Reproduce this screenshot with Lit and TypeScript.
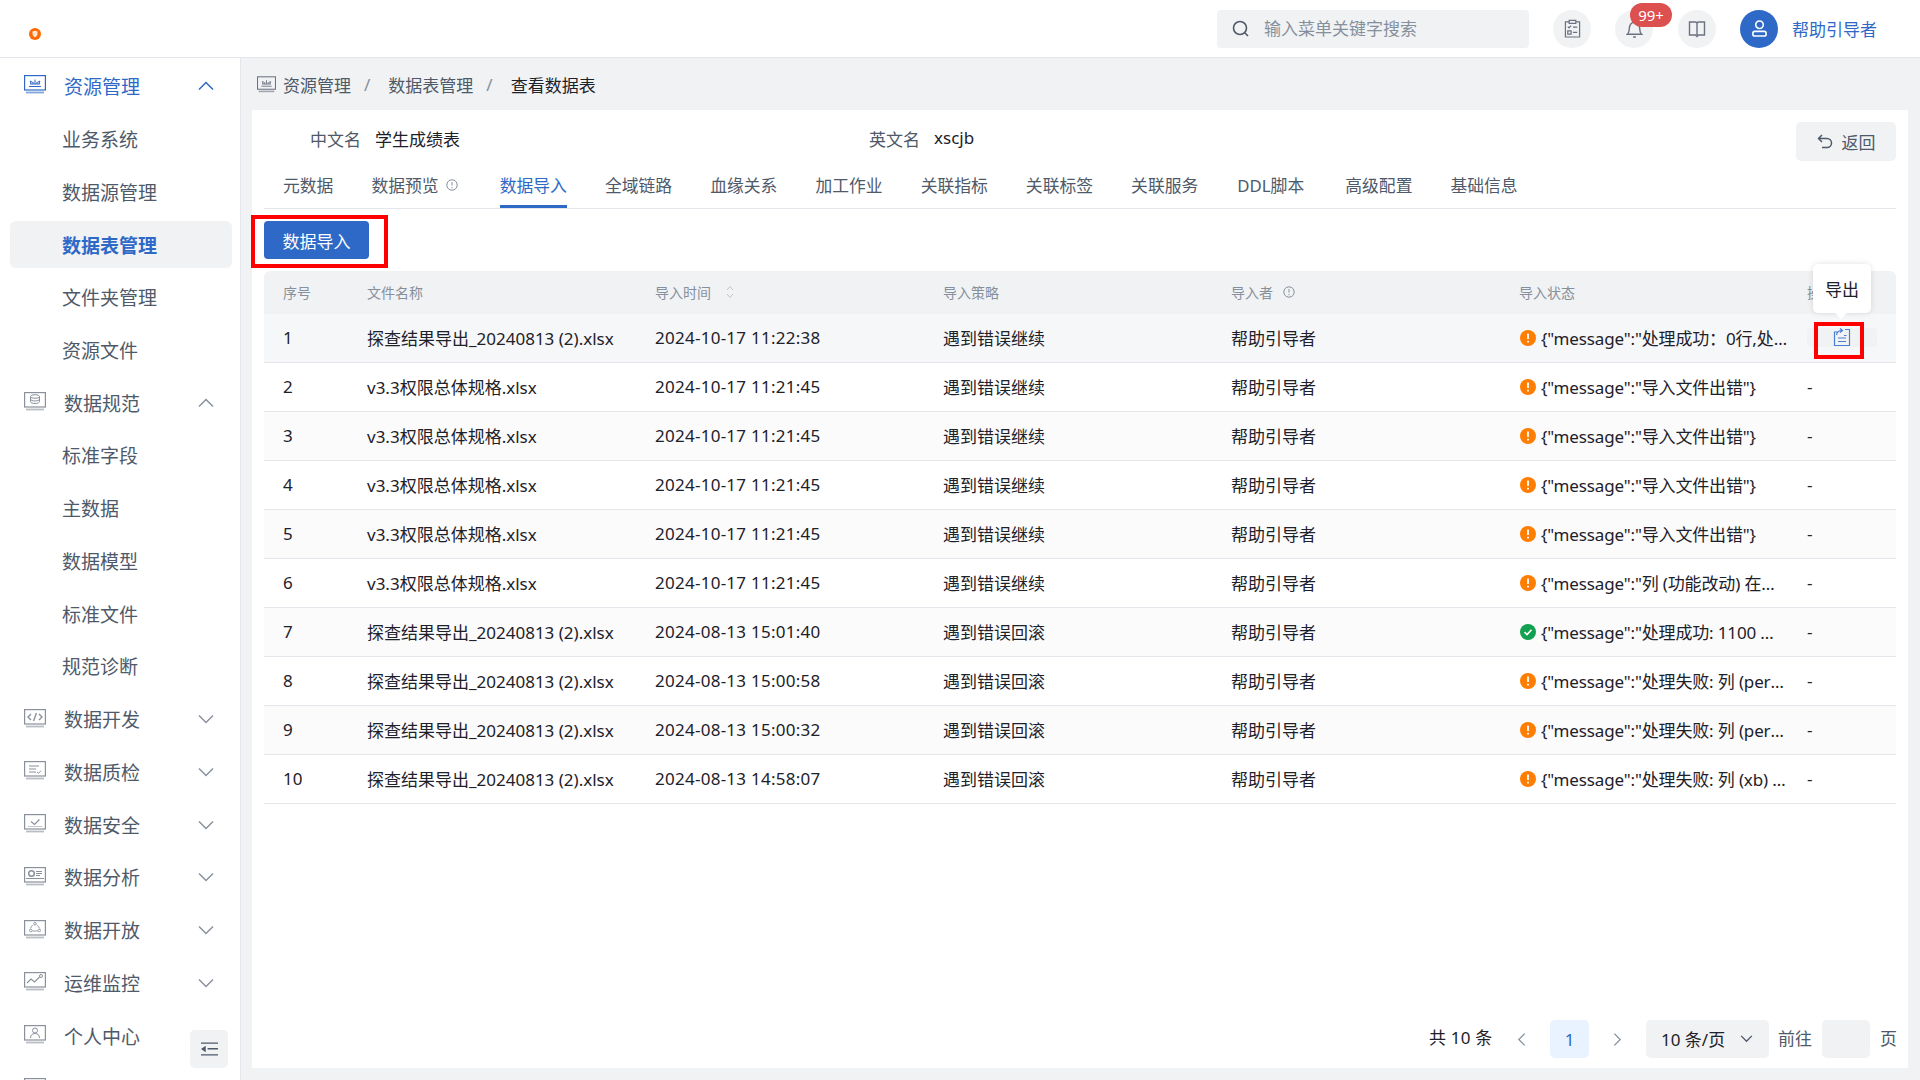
import { LitElement, html, css, svg } from 'lit'
import { customElement } from 'lit/decorators.js'

const monitor = (inner: unknown) => html`<svg class="mon" viewBox="0 0 22 19" width="22" height="19" fill="none" stroke="currentColor">
  <rect x="0.6" y="0.6" width="20.8" height="14.4" stroke-width="1.2" />
  <path d="M2 17.5h18" stroke-width="1.8" opacity=".6" />
  ${inner}
</svg>`

const sideIcons: Record<string, unknown> = {
  res: svg`<path d="M5 11.5h12M6 9h10M7 9l-.8-3 2.4 1.4M15 9l.8-3-2.4 1.4M11 9V4.5M9 9V6.8M13 9V6.8" stroke-width="1" />`,
  spec: svg`<ellipse cx="11" cy="4.5" rx="4.5" ry="1.8" stroke-width="1" /><path d="M6.5 7c0 1.2 2 2 4.500 2s4.500-.8 4.500-2M6.500 9.500c0 1.200 2 2 4.500 2s4.500-.8 4.500-2M6.500 4.500v5M15.500 4.500v5" stroke-width="1" />`,
  dev: svg`<path d="M7 5 4 8l3 3M15 5l3 3-3 3M12.500 4 9.500 12" stroke-width="1.400" />`,
  qc: svg`<path d="M5 5h10M5 8h7M5 11h7M13 11l1.500 1.300 2.500-2.600" stroke-width="1" />`,
  safe: svg`<path d="M7 7.500l3.500 3L15.500 5.500" stroke-width="1.200" /><path d="M4 12.500h14" stroke-width="1" opacity=".5" />`,
  ana: svg`<circle cx="7.500" cy="6.500" r="2.800" stroke-width="1.500" /><path d="M12 4.500h6M12 6.500h6M12 8.500h4M2 11.500h18" stroke-width="1.200" />`,
  open: svg`<circle cx="11" cy="3.800" r="1.300" stroke-width=".9" /><circle cx="6.800" cy="10.500" r="1.300" stroke-width=".9" /><circle cx="15.200" cy="10.500" r="1.300" stroke-width=".9" /><path d="M8.500 5.200 6.300 8.500M13.500 5.200l2.200 3.300M8.500 11h5" stroke-width=".9" />`,
  ops: svg`<path d="M3 11l4-4 3.500 3L15.500 5" stroke-width="1.100" /><circle cx="17" cy="4" r="1.500" stroke-width="1" />`,
  me: svg`<circle cx="11" cy="5.500" r="2.500" stroke-width="1" /><path d="M6.500 13c0-3 2-4.500 4.500-4.500s4.500 1.500 4.500 4.500" stroke-width="1" />`,
}

const chevron = (up: boolean) => html`<svg class="chev" viewBox="0 0 16 10" width="16" height="10" fill="none" stroke="currentColor" stroke-width="1.500">
  <path d=${up ? 'M1 8.500 8 1.500l7 7' : 'M1 1.500l7 7 7-7'} />
</svg>`

const info = () => html`<svg class="info" viewBox="0 0 12 12" width="12" height="12" fill="none" stroke="currentColor">
  <circle cx="6" cy="6" r="5.200" stroke-width="1" /><path d="M6 3v3.600M6 8v1.200" stroke-width="1" />
</svg>`

type Menu = { label: string; icon?: string; open?: boolean; active?: boolean; current?: boolean; sub?: boolean; noChev?: boolean }

const menu: Menu[] = [
  { label: '资源管理', icon: 'res', open: true, current: true },
  { label: '业务系统', sub: true },
  { label: '数据源管理', sub: true },
  { label: '数据表管理', sub: true, active: true },
  { label: '文件夹管理', sub: true },
  { label: '资源文件', sub: true },
  { label: '数据规范', icon: 'spec', open: true },
  { label: '标准字段', sub: true },
  { label: '主数据', sub: true },
  { label: '数据模型', sub: true },
  { label: '标准文件', sub: true },
  { label: '规范诊断', sub: true },
  { label: '数据开发', icon: 'dev' },
  { label: '数据质检', icon: 'qc' },
  { label: '数据安全', icon: 'safe' },
  { label: '数据分析', icon: 'ana' },
  { label: '数据开放', icon: 'open' },
  { label: '运维监控', icon: 'ops' },
  { label: '个人中心', icon: 'me', noChev: true },
  { label: '', icon: 'me', noChev: true },
]

const tabs = ['元数据', '数据预览', '数据导入', '全域链路', '血缘关系', '加工作业', '关联指标', '关联标签', '关联服务', 'DDL脚本', '高级配置', '基础信息']

const longName = '探查结果导出_20240813 (2).xlsx'
const v33 = 'v3.3权限总体规格.xlsx'
const rows = [
  [longName, '2024-10-17 11:22:38', '遇到错误继续', '{"message":"处理成功：0行,处理失败：0行"}', 'warn'],
  [v33, '2024-10-17 11:21:45', '遇到错误继续', '{"message":"导入文件出错"}', 'warn'],
  [v33, '2024-10-17 11:21:45', '遇到错误继续', '{"message":"导入文件出错"}', 'warn'],
  [v33, '2024-10-17 11:21:45', '遇到错误继续', '{"message":"导入文件出错"}', 'warn'],
  [v33, '2024-10-17 11:21:45', '遇到错误继续', '{"message":"导入文件出错"}', 'warn'],
  [v33, '2024-10-17 11:21:45', '遇到错误继续', '{"message":"列 (功能改动) 在文件中不存在"}', 'warn'],
  [longName, '2024-08-13 15:01:40', '遇到错误回滚', '{"message":"处理成功: 1100 行数据导入完成"}', 'ok'],
  [longName, '2024-08-13 15:00:58', '遇到错误回滚', '{"message":"处理失败: 列 (person) 不存在"}', 'warn'],
  [longName, '2024-08-13 15:00:32', '遇到错误回滚', '{"message":"处理失败: 列 (person) 不存在"}', 'warn'],
  [longName, '2024-08-13 14:58:07', '遇到错误回滚', '{"message":"处理失败: 列 (xb) 不存在于文件"}', 'warn'],
]

@customElement('app-root')
export class AppRoot extends LitElement {
  static styles = css`
    :host {
      display: block;
      width: 1920px;
      height: 1080px;
      overflow: hidden;
      background: #f1f2f4;
      color: #1d2129;
      font-family: 'Noto Sans', 'Noto Sans CJK SC', sans-serif;
      font-size: 17px;
    }
    svg { display: block; flex: none; }

    .top {
      height: 57px;
      background: #fff;
      border-bottom: 1px solid #e5e6eb;
      display: flex;
      align-items: center;
      position: relative;
    }
    .logo { margin-left: 29px; margin-top: 11px; }
    .search {
      margin-left: auto;
      width: 312px;
      height: 38px;
      background: #f1f2f4;
      border-radius: 4px;
      display: flex;
      align-items: center;
      gap: 14px;
      padding: 0 0 2px 15px;
      box-sizing: border-box;
      color: #86909c;
    }
    .search svg { color: #4e5969; margin-top: 2px; }
    .round {
      width: 38px;
      height: 38px;
      border-radius: 50%;
      background: #f1f2f4;
      margin-left: 24px;
      display: flex;
      align-items: center;
      justify-content: center;
      color: #6b7280;
      position: relative;
    }
    .round.wide { margin-left: 25px; }
    .round.avatar { background: #2e69c7; color: #fff; }
    .badge {
      position: absolute;
      left: 15px;
      top: -7px;
      width: 42px;
      height: 24px;
      border-radius: 12px;
      background: #dc5050;
      color: #fff;
      font-size: 15px;
      line-height: 24px;
      text-align: center;
    }
    .user { color: #2e69c7; margin-left: 14px; margin-right: 43px; }

    .body { display: flex; height: 1022px; }
    .side {
      width: 241px;
      flex: none;
      box-sizing: border-box;
      background: #fff;
      border-right: 1px solid #e5e6eb;
      padding-top: 1.600px;
      position: relative;
      overflow: hidden;
      font-size: 19px;
      color: #4e5969;
    }
    .item {
      height: 52.780px;
      display: flex;
      align-items: center;
      padding-left: 24px;
      position: relative;
    }
    .item .mon { color: #8a919c; margin-top: -2px; }
    .item .label { margin-left: 18px; }
    .item .chev { position: absolute; left: 198px; color: #8a919c; }
    .item.sub { padding-left: 62px; }
    .item.sub .label { margin-left: 0; }
    .item.current { color: #2e69c7; }
    .item.current .mon, .item.current .chev { color: #2e69c7; }
    .item.active { color: #2e69c7; font-weight: 700; }
    .item.active::before {
      content: '';
      position: absolute;
      left: 10px;
      right: 8px;
      top: 3px;
      bottom: 3px;
      background: #f1f2f4;
      border-radius: 6px;
    }
    .item.active .label { position: relative; top: 1px; }
    .collapse {
      position: absolute;
      left: 190px;
      bottom: 12px;
      width: 38px;
      height: 38px;
      background: #f1f2f4;
      border-radius: 5px;
      display: flex;
      align-items: center;
      justify-content: center;
      color: #4e5969;
    }

    .main { flex: 1; min-width: 0; padding-right: 12px; display: flex; flex-direction: column; }
    .crumbs {
      height: 52px;
      padding-left: 16px;
      display: flex;
      align-items: center;
      color: #4e5969;
    }
    .crumbs .mon { margin-right: 7px; color: #6b7280; width: 19px; height: 17px; }
    .crumbs i { font-style: normal; color: #86909c; margin: 0 18px 0 13px; }
    .crumbs b { font-weight: 400; color: #1d2129; }

    .card {
      margin-left: 11px;
      height: 958px;
      background: #fff;
      padding: 0 12px;
      display: flex;
      flex-direction: column;
      position: relative;
    }
    .names { height: 60px; display: flex; align-items: center; position: relative; padding-bottom: 4px; box-sizing: border-box; }
    .names .k { color: #4e5969; }
    .names .v { margin-left: 14px; }
    .names .cn { margin-left: 46px; width: 559px; display: flex; }
    .names .en { display: flex; }
    .back {
      margin-left: auto;
      margin-top: 7px;
      width: 100px;
      height: 39px;
      background: #f1f2f4;
      border-radius: 5px;
      display: flex;
      align-items: center;
      justify-content: center;
      gap: 9px;
      color: #4e5969;
    }
    .tabs {
      height: 38px;
      border-bottom: 1px solid #e5e6eb;
      display: flex;
      gap: 38.100px;
      padding-left: 19px;
      color: #4e5969;
      font-size: 16.800px;
    }
    .tab { display: flex; align-items: flex-start; gap: 7px; padding-top: 4px; height: 33px; box-sizing: border-box; line-height: 23px; }
    .tab .info { color: #86909c; margin: 5px 4px 0 0; }
    .tab.on { color: #2e69c7; box-shadow: inset 0 -3px 0 #2e69c7; height: 38px; }
    .tab:nth-child(10) { margin: 0 3px 0 1px; }

    .tools { height: 62px; display: flex; align-items: flex-start; padding-top: 12px; box-sizing: border-box; }
    .primary {
      width: 105px;
      height: 38px;
      border-radius: 4px;
      background: #2e69c7;
      color: #fff;
      display: flex;
      align-items: center;
      justify-content: center;
      position: relative;
    }
    .mark { position: absolute; border: 4px solid #ff0000; box-sizing: border-box; pointer-events: none; }
    .primary .mark { left: -13px; top: -6px; width: 137px; height: 53px; }

    .row { display: grid; grid-template-columns: 84px repeat(5, 288px) 1fr; align-items: center; }
    .row > div { padding-left: 19px; min-width: 0; white-space: nowrap; }
    .head { height: 43px; background: #f1f2f4; border-radius: 6px 6px 0 0; font-size: 14px; color: #86909c; padding-bottom: 1px; box-sizing: border-box; }
    .head .cell { display: flex; align-items: center; gap: 10px; }
    .head .cell.sort { gap: 15px; }
    .data { height: 49px; border-bottom: 1px solid #e5e6eb; box-sizing: border-box; padding-bottom: 1px; }
    .data:nth-child(odd) { background: #fbfbfc; }
    .data.first { background: #f6f7f9; }
    .date { letter-spacing: .26px; }
    .status { display: flex; align-items: center; gap: 5px; }
    .status span { overflow: hidden; text-overflow: ellipsis; flex: 1; min-width: 0; letter-spacing: -.15px; }
    .dot { width: 16px; height: 16px; margin-left: 1px; }
    .ops { position: relative; }
    .ops .hl {
      position: absolute;
      left: 19px;
      top: -10px;
      width: 70px;
      height: 19px;
      border-radius: 4px;
      background: #f1f2f4;
      display: flex;
      align-items: center;
      justify-content: center;
    }
    .ops .mark { left: 26px; top: -16px; width: 50px; height: 37px; }
    .tip {
      position: absolute;
      left: 25px;
      top: -74px;
      width: 58px;
      height: 49px;
      background: #fff;
      border-radius: 5px;
      box-shadow: 0 0 6px rgba(0, 0, 0, .12);
      display: flex;
      align-items: center;
      justify-content: center;
      color: #1d2129;
    }
    .tip::after {
      content: '';
      position: absolute;
      left: 22px;
      bottom: -6px;
      width: 12px;
      height: 12px;
      background: #fff;
      transform: rotate(45deg) scale(.7);
    }

    .pager {
      margin-top: auto;
      height: 48px;
      display: flex;
      align-items: flex-start;
      color: #1d2129;
    }
    .pager > * { flex: none; }
    .total { margin-left: 1165px; width: 64px; line-height: 36px; white-space: nowrap; letter-spacing: .2px; }
    .pg { width: 39px; height: 38px; display: flex; align-items: center; justify-content: center; color: #86909c; }
    .pg.on { background: #e8f3ff; color: #2e69c7; border-radius: 5px; margin: 0 9px; }
    .prev { margin-left: 9px; }
    .size {
      margin-left: 9px;
      width: 123px;
      height: 38px;
      background: #f1f2f4;
      border-radius: 5px;
      display: flex;
      align-items: center;
      gap: 15px;
      padding: 0 0 1px 15px;
      box-sizing: border-box;
      white-space: nowrap;
    }
    .size svg { color: #4e5969; }
    .goto { margin-left: 9px; line-height: 38px; color: #4e5969; white-space: nowrap; }
    .jump { margin-left: 10px; width: 48px; height: 38px; background: #f1f2f4; border-radius: 5px; }
    .unit { margin-left: 10px; line-height: 38px; color: #4e5969; }
  `

  private renderSide() {
    return menu.map(
      (m) => html`<div class="item ${m.sub ? 'sub' : ''} ${m.active ? 'active' : ''} ${m.current ? 'current' : ''}">
        ${m.icon ? monitor(sideIcons[m.icon]) : ''}
        <span class="label">${m.label}</span>
        ${m.sub || m.noChev ? '' : chevron(!!m.open)}
      </div>`,
    )
  }

  private renderRow(r: string[], i: number) {
    return html`<div class="row data ${i === 0 ? 'first' : ''}">
      <div>${i + 1}</div>
      <div>${r[0]}</div>
      <div class="date">${r[1]}</div>
      <div>${r[2]}</div>
      <div>帮助引导者</div>
      <div class="status">
        <svg class="dot" viewBox="0 0 16 16">
          ${r[4] === 'ok'
            ? svg`<circle cx="8" cy="8" r="8" fill="#12a150" /><path d="M4.500 8.200l2.500 2.400 4.500-4.800" fill="none" stroke="#fff" stroke-width="1.600" />`
            : svg`<circle cx="8" cy="8" r="8" fill="#ff7d00" /><path d="M8 3.500v5.500M8 10.800v1.800" fill="none" stroke="#fff" stroke-width="1.800" />`}
        </svg>
        <span>${r[3]}</span>
      </div>
      ${i === 0
        ? html`<div class="ops">
            <div class="tip">导出</div>
            <div class="hl">
              <svg viewBox="0 0 18 20" width="18" height="20" fill="none" stroke="#4a80d4" stroke-width="1.200">
                <path d="M5 5H1.500v13.500h15V2.500H12M5 11h8M5 14.500h8M11 8.500h2.500M3.500 8c.5-3 3-4.500 5.500-4.500M7 1.500l2.500 2-2.500 2" />
              </svg>
            </div>
            <div class="mark"></div>
          </div>`
        : html`<div>-</div>`}
    </div>`
  }

  render() {
    return html`
      <div class="top">
        <svg class="logo" viewBox="0 0 12 12" width="12" height="12">
          <circle cx="6" cy="6" r="6" fill="#ff6a00" />
          <path d="M3.500 3.500 6 2.800l2.500.7v2.300C8.500 7.500 7 8.700 6 9.200 5 8.700 3.500 7.500 3.500 5.800z" fill="#ffe9d6" />
        </svg>
        <div class="search">
          <svg viewBox="0 0 18 18" width="18" height="18" fill="none" stroke="currentColor" stroke-width="1.600">
            <circle cx="8" cy="8" r="6.500" /><path d="M13 13l3 3" />
          </svg>
          输入菜单关键字搜索
        </div>
        <div class="round">
          <svg viewBox="0 0 18 20" width="17" height="19" fill="none" stroke="currentColor" stroke-width="1.300">
            <path d="M5.500 3H1.500v16h15V3h-4M5.500 1.500h7v3h-7zM4 8l1.300 1.300L7.500 7M9.500 8.500h4.500M4 12.500h3.500v3.500H4zM9.500 14h4.500" />
          </svg>
        </div>
        <div class="round">
          <svg viewBox="0 0 18 20" width="17" height="20" fill="none" stroke="currentColor" stroke-width="1.500">
            <path d="M1.500 15.500c1.500-1.500 2-3 2-6S5.500 2.500 9 2.500s5.500 4 5.500 7 .5 4.500 2 6zM7.500 18.500h3" />
          </svg>
          <span class="badge">99+</span>
        </div>
        <div class="round wide">
          <svg viewBox="0 0 18 18" width="18" height="18" fill="none" stroke="currentColor" stroke-width="1.400">
            <path d="M1.500 2H7c1 0 2 .6 2 1.500C9 2.600 10 2 11 2h5.500v13h-6L9 16.500 7.500 15h-6zM9 3.500V15" />
          </svg>
        </div>
        <div class="round avatar">
          <svg viewBox="0 0 18 20" width="17" height="19" fill="none" stroke="currentColor" stroke-width="1.700">
            <circle cx="9" cy="6" r="4" /><rect x="2" y="13" width="14" height="5" rx="2" />
          </svg>
        </div>
        <div class="user">帮助引导者</div>
      </div>
      <div class="body">
        <div class="side">
          ${this.renderSide()}
          <div class="collapse">
            <svg viewBox="0 0 18 14" width="17" height="14" fill="currentColor">
              <path d="M0 0h18v1.500H0zM7 6h11v1.500H7zM0 12.500h18V14H0zM5 3.500v7L0 7z" />
            </svg>
          </div>
        </div>
        <div class="main">
          <div class="crumbs">
            ${monitor(sideIcons.res)}
            <span>资源管理</span><i>/</i><span>数据表管理</span><i>/</i><b>查看数据表</b>
          </div>
          <div class="card">
            <div class="names">
              <div class="cn"><span class="k">中文名</span><span class="v">学生成绩表</span></div>
              <div class="en"><span class="k">英文名</span><span class="v">xscjb</span></div>
              <div class="back">
                <svg viewBox="0 0 16 15" width="16" height="15" fill="none" stroke="currentColor" stroke-width="1.500">
                  <path d="M5 1 1.500 4.500 5 8M1.500 4.500H10a4.500 4.500 0 0 1 0 9H5" />
                </svg>
                返回
              </div>
            </div>
            <div class="tabs">
              ${tabs.map(
                (t, i) => html`<div class="tab ${i === 2 ? 'on' : ''}">${t}${i === 1 ? info() : ''}</div>`,
              )}
            </div>
            <div class="tools">
              <div class="primary">数据导入<div class="mark"></div></div>
            </div>
            <div class="row head">
              <div>序号</div>
              <div>文件名称</div>
              <div class="cell sort">导入时间
                <svg viewBox="0 0 8 14" width="8" height="14" fill="none" stroke="#c2c6cc" stroke-width="1">
                  <path d="M1 5l3-3.500L7 5M1 9l3 3.500L7 9" />
                </svg>
              </div>
              <div>导入策略</div>
              <div class="cell">导入者 ${info()}</div>
              <div>导入状态</div>
              <div>操作</div>
            </div>
            <div class="rows">${rows.map((r, i) => this.renderRow(r, i))}</div>
            <div class="pager">
              <div class="total">共 10 条</div>
              <div class="pg prev">
                <svg viewBox="0 0 10 16" width="9" height="15" fill="none" stroke="currentColor" stroke-width="1.400"><path d="M8.500 1.500 2 8l6.500 6.500" /></svg>
              </div>
              <div class="pg on">1</div>
              <div class="pg">
                <svg viewBox="0 0 10 16" width="9" height="15" fill="none" stroke="currentColor" stroke-width="1.400"><path d="M1.500 1.500 8 8l-6.500 6.500" /></svg>
              </div>
              <div class="size">10 条/页
                <svg viewBox="0 0 14 9" width="13" height="8" fill="none" stroke="currentColor" stroke-width="1.500"><path d="M1 1l6 6 6-6" /></svg>
              </div>
              <div class="goto">前往</div>
              <div class="jump"></div>
              <div class="unit">页</div>
            </div>
          </div>
        </div>
      </div>
    `
  }
}
